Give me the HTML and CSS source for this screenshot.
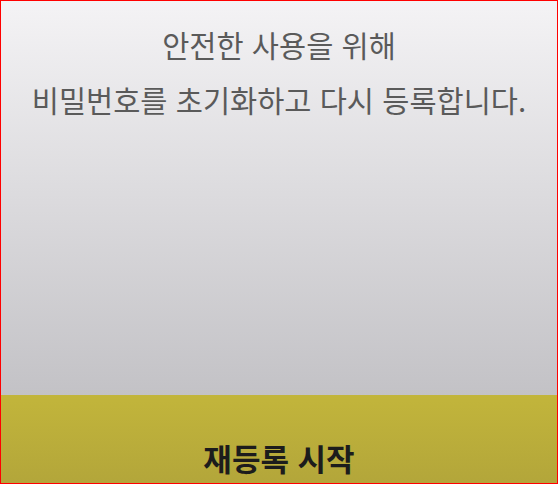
FILE: index.html
```html
<!DOCTYPE html>
<html lang="ko">
<head>
    <meta charset="UTF-8">
    <meta name="viewport" content="width=device-width, initial-scale=1.0">
    <title>재등록</title>
    <link rel="stylesheet" href="styles.css">
</head>
<body>
    <div class="screen">
        <section class="notice">
            <p>안전한 사용을 위해</p>
            <p>비밀번호를 초기화하고 다시 등록합니다.</p>
        </section>
        <button class="start">재등록 시작</button>
    </div>
</body>
</html>
```

FILE: styles.css
```css
* {
    margin: 0;
    padding: 0;
    box-sizing: border-box;
    font-family: "Noto Sans CJK KR", "Noto Sans", sans-serif;
}
body {
    width: 558px;
    height: 484px;
    overflow: hidden;
}
.screen {
    height: 484px;
    display: flex;
    flex-direction: column;
    border: 1px solid #ff0000;
}
.notice {
    flex: 1;
    background: linear-gradient(#f4f3f5, #c3c2c6);
    text-align: center;
    color: #5a5a5a;
    font-size: 29.5px;
    line-height: 55px;
    padding-top: 16px;
}
.start {
    height: 88px;
    border: none;
    background: linear-gradient(#c2b53b, #b3a63a);
    color: #1c1c1c;
    font-size: 31px;
    font-weight: bold;
    padding-top: 36px;
}
```
